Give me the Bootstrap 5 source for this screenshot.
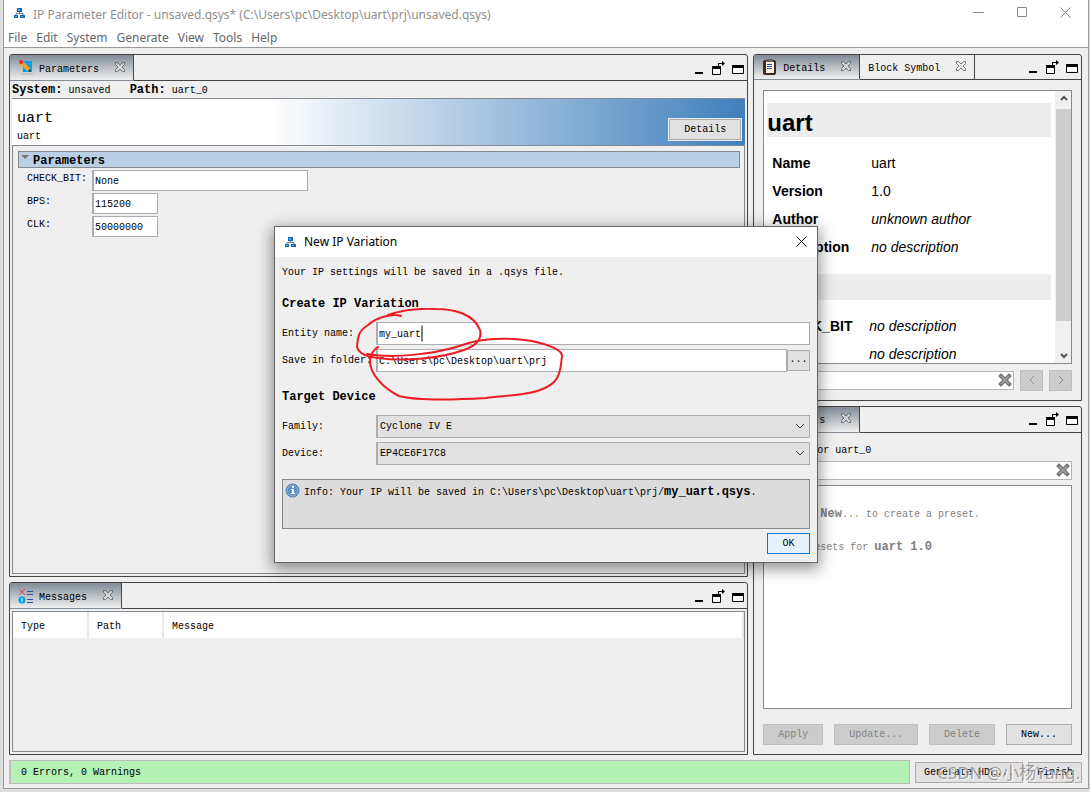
<!DOCTYPE html>
<html lang="en">
<head>
<meta charset="utf-8">
<meta name="viewport" content="width=device-width, initial-scale=1">
<title>IP Parameter Editor</title>
<link href="https://cdn.jsdelivr.net/npm/bootstrap@5.3.0/dist/css/bootstrap.min.css" rel="stylesheet">
<style>
:root{--face:#efefef;--edge:#444;--rim:#858990;--soft:#acacb2}
body{height:100vh;overflow:hidden;background:#dfdfdf;color:#000;font:10px/16px "Liberation Mono",monospace;padding:0 1px 3px 3px}
b,.strong{font-size:12px;font-weight:700}
input,select,button{font:inherit;color:inherit;border-radius:0}
svg{display:block;flex:none}
.ui-font{font-family:"Noto Sans","Noto Sans CJK SC",sans-serif;font-size:12px}
.frame{background:var(--face);border:1px solid #999;border-top:0}
.titlebar{height:25px;padding:0 17px 0 10px;color:#8f8f8f;background:#fff}
.titlebar svg{color:#888}
.ghost{background:none;border:0;padding:0}
.menus{height:23px;border-bottom:1px solid #999;gap:9px;padding:0 4px;background:#fff}
.menus a{color:#666;text-decoration:none;line-height:26px}
.work{padding:6px 6px 0 5px;gap:5px;min-height:0}
.col-main{flex:740 1 0;gap:5px;min-width:0}
.col-side{flex:329 1 0;gap:5px;min-width:0}
.pane{border:1px solid var(--edge);border-radius:3px 3px 0 0;min-height:0}
.grow-a{flex:525 1 0}.grow-b{flex:172 1 0}.grow-c{flex:347 1 0}.grow-d{flex:350 1 0}
.tabs{height:26px}
.tab-item{border-right:1px solid var(--edge);border-bottom:1px solid var(--edge);padding:0 6px 0 8px;gap:5px}
.tab-item span{line-height:20px;padding-top:4px}
.tab-item.on{background:linear-gradient(#808b97,#c4c8cc 60%,var(--face));border-bottom-color:transparent}
.tab-item .ghost{margin:0 1px 2px 10px}
.tab-fill{border-bottom:1px solid var(--edge);padding:2px 2px 0 0}
.crumbs{height:17px;padding:0 2px;line-height:19px;white-space:pre}
.banner{margin:0 2px;height:48px;border:solid var(--rim);border-width:1px 0;background:linear-gradient(90deg,#fff 35%,#3f7fbd 100%);padding:0 4px 0 5px}
.banner h1{font-size:15px;line-height:20px;margin:10px 0 0;font-weight:400}
.wbtn{background:#e1e1e1;border:1px solid #adadad;height:21px;padding:1px 14px 0;line-height:18px;white-space:nowrap}
.wbtn:disabled{background:#ccc;border-color:#bfbfbf;color:#838383}
.banner .wbtn{box-shadow:0 0 0 1px #e8eef5;margin-bottom:5px;width:72px}
.sheet{margin:0 2px 2px;border:1px solid var(--rim);border-top:0;padding:5px 4px 0 5px}
.fold{height:17px;border:1px solid var(--rim);background:#b8cfe5;padding:0 2px;gap:4px}
.fold span{line-height:19px}
.prm{display:grid;grid-template-columns:65px 216px;row-gap:2px;padding:2px 0 0 9px}
.prm label{line-height:17px}
.field{background:#fff;border:1px solid var(--soft);border-left-width:2px;height:21px;padding:2px 0 0 1px;width:100%;min-width:0}
.prm .short{width:66px}
.msgs{margin:2px;border:1px solid var(--rim)}
.msgs table{width:100%;table-layout:fixed}
.msgs th{height:26px;background:#fff;font-weight:400;border-right:2px solid #e8e8e8;padding:4px 0 0 8px}
.side{padding:10px 9px 9px}
.doc-box{border:1px solid var(--rim);background:#fff;min-height:0}
.doc{font:14px/28px "Liberation Sans",Arial,sans-serif;padding:12px 4px 0 3px;overflow:hidden}
.doc h2{font-size:24px;line-height:40px;height:34px;margin:0 0 12px;background:#ededed;font-weight:700}
.doc h3{font-size:18px;line-height:26px;height:26px;margin:13px 0 12px;background:#ededed;font-weight:700}
.doc th{padding:0 0 0 5px;width:104px;font-weight:700}
.doc td{padding:0}
.doc td,.doc th{line-height:28px}
.second th{width:102px}
.vbar{width:16px;background:#f0f0f0;border-left:1px solid #f0f0f0;padding:4px 0}
.thumb{background:#cdcdcd;height:212px}
.find{border:1px solid #b5b5b5;background:#fff;height:19px;padding-right:1px}
.find input{border:0;background:none;min-width:0}
.trim{gap:6px}
.nav-sq{width:23px;height:21px;padding:0}
.preset-row{margin:2px 0 5px}
.actions{margin-top:15px}
.ready{border:1px solid #bdbdbd;border-left-width:2px;background:#b4f1b4;height:24px;padding:0 10px;line-height:24px}
.foot{padding:5px 6px 4px 5px;gap:5px}
.foot .wbtn{padding:1px 8px 0}
.layer{pointer-events:none}
.dlg{pointer-events:auto;width:544px;border:1px solid #666;background:var(--face);box-shadow:0 4px 14px 2px rgba(0,0,0,.42)}
.dlg-top{height:30px;background:#fff;padding:0 10px}
.dlg-body{padding:8px 7px}
.dlg h2{font-size:12px;line-height:16px;font-weight:700;margin:15px 0 10px}
.pairs{display:grid;grid-template-columns:94px 1fr;row-gap:4px;padding-bottom:2px}
.pairs label{line-height:23px}
.pairs .field,.pairs .pick{height:23px}
.pick{appearance:none;width:100%;border:1px solid var(--soft);border-left-width:2px;padding:1px 2px 0;background:#e1e1e1 url("data:image/svg+xml,%3Csvg xmlns='http://www.w3.org/2000/svg' width='10' height='6'%3E%3Cpath d='M1 1l4 4 4-4' fill='none' stroke='%23444'/%3E%3C/svg%3E") no-repeat right 4px center}
.note{margin-top:12px;height:50px;border:1px solid var(--rim);background:#dcdcdc;padding:3px 2px;gap:4px;line-height:19px}
.ok{background:#e5f1fb;border-color:#0078d7;width:43px;padding:1px 0 0}
.ink{left:81px;top:81px}
.hint{color:#808080;padding:20px}
.mark-text{right:8px;bottom:2px;font:17px/26px "Noto Sans","Noto Sans CJK SC",sans-serif;color:rgba(130,130,130,.75);text-shadow:1px 1px 0 rgba(255,255,255,.8);pointer-events:none}
</style>
</head>
<body class="d-flex flex-column">
<svg width="0" height="0" class="position-absolute" aria-hidden="true">
  <symbol id="i-app" viewBox="0 0 11 12"><path d="M5.500 4v3M2 9V6.500h7V9" fill="none" stroke="#5f7f99"/><path d="M3 1h5v4H3zM0 8h4v3H0zM6 8h5v3H6z" fill="#1467b4"/><path d="M4 2h2v2H4zM1 9h2v1H1zM7 9h2v1H7z" fill="#3fb0f0"/></symbol>
  <symbol id="i-x" viewBox="0 0 12 12"><path d="M1.500 1.500h2L6 4l2.500-2.500h2v2L8 6l2.500 2.500v2h-2L6 8l-2.500 2.500h-2v-2L4 6 1.500 3.500z" fill="#f4f4f4" fill-opacity=".4" stroke="#666" stroke-width=".9"/></symbol>
  <symbol id="i-win" viewBox="0 0 50 16"><path d="M0 11h8v2H0z"/><path d="M17.500 5.500h8v8h-8z" fill="#fff" stroke="#000"/><path d="M17 5h9v3h-9zM23 5V2h4V0l3 2.500L27 5V3h-3v2z"/><path d="M37.500 5.500h11v7h-11z" fill="#fff" stroke="#000"/><path d="M37 4h12v3H37z"/></symbol>
  <symbol id="i-clear" viewBox="0 0 14 14"><path d="M3 3l8 8m0-8l-8 8" stroke="#6f6f6f" stroke-width="4" stroke-linecap="square"/><path d="M3 3l8 8m0-8l-8 8" stroke="#9b9b9b" stroke-width="2"/></symbol>
</svg>

<div class="frame flex-fill d-flex flex-column position-relative">
  <header class="titlebar ui-font d-flex align-items-center">
    <svg width="11" height="12"><use href="#i-app"/></svg>
    <span class="ms-2 pt-1 me-auto">IP Parameter Editor - unsaved.qsys* (C:\Users\pc\Desktop\uart\prj\unsaved.qsys)</span>
    <button class="ghost" aria-label="Minimize"><svg width="11" height="11"><path d="M0 5.500h11" stroke="currentColor"/></svg></button>
    <button class="ghost ms-4 px-2" aria-label="Maximize"><svg width="12" height="11"><path d="M1.500.5h9v9h-9z" fill="none" stroke="currentColor"/></svg></button>
    <button class="ghost ms-4" aria-label="Close"><svg width="11" height="11"><path d="M.5.5l10 10m0-10l-10 10" stroke="currentColor"/></svg></button>
  </header>
  <nav class="menus ui-font d-flex">
    <a href="#">File</a><a href="#">Edit</a><a href="#">System</a><a href="#">Generate</a><a href="#">View</a><a href="#">Tools</a><a href="#">Help</a>
  </nav>

  <main class="work flex-fill d-flex">
    <div class="col-main d-flex flex-column">
      <section class="pane grow-a d-flex flex-column">
        <div class="tabs d-flex">
          <div class="tab-item on d-flex align-items-center">
            <svg width="16" height="16"><path d="M3 13h12v2H3z" fill="#c4c4c4"/><path d="M5 1h9v11H5z" fill="#00a2f2"/><path d="M3 2l8 8" stroke="#f1a520" stroke-width="4"/><path d="M10 11l3 1-1-3z" fill="#333"/><circle cx="3" cy="2" r="2" fill="#e8252e"/></svg>
            <span>Parameters</span><button class="ghost" aria-label="Close Parameters"><svg width="12" height="12"><use href="#i-x"/></svg></button>
          </div>
          <div class="tab-fill flex-fill d-flex justify-content-end align-items-center"><svg width="50" height="16"><use href="#i-win"/></svg></div>
        </div>
        <div class="crumbs"><b>System:</b> unsaved  <b> Path:</b> uart_0</div>
        <div class="banner d-flex justify-content-between align-items-end">
          <div class="align-self-start"><h1>uart</h1><div>uart</div></div>
          <button class="wbtn">Details</button>
        </div>
        <div class="sheet flex-fill">
          <button class="fold w-100 d-flex align-items-start"><svg width="8" height="8"><path d="M0 3h8L4 7z" fill="#777"/></svg><span class="strong">Parameters</span></button>
          <form class="prm">
            <label for="cb">CHECK_BIT:</label><input id="cb" class="field" value="None">
            <label for="bps">BPS:</label><input id="bps" class="field short" value="115200">
            <label for="clk">CLK:</label><input id="clk" class="field short" value="50000000">
          </form>
        </div>
      </section>

      <section class="pane grow-b d-flex flex-column">
        <div class="tabs d-flex">
          <div class="tab-item on d-flex align-items-center">
            <svg width="16" height="16"><path d="M1 1l6 6m0-6L1 7" stroke="#e8483f"/><circle cx="4" cy="12" r="3.500" fill="#00a2f2"/><path d="M4 10v4" stroke="#fff"/><path d="M9 3.500h6M9 6.500h6M9 11.500h6M9 14.500h6" stroke="#2450a8"/></svg>
            <span>Messages</span><button class="ghost" aria-label="Close Messages"><svg width="12" height="12"><use href="#i-x"/></svg></button>
          </div>
          <div class="tab-fill flex-fill d-flex justify-content-end align-items-center"><svg width="50" height="16"><use href="#i-win"/></svg></div>
        </div>
        <div class="msgs flex-fill">
          <table><colgroup><col style="width:75px"><col style="width:75px"><col></colgroup>
            <thead><tr><th>Type</th><th>Path</th><th>Message</th></tr></thead></table>
        </div>
      </section>
    </div>

    <div class="col-side d-flex flex-column">
      <section class="pane grow-c d-flex flex-column">
        <div class="tabs d-flex">
          <div class="tab-item on d-flex align-items-center">
            <svg width="16" height="16"><rect x="1" y="1" width="13" height="15" rx="2" fill="#402828"/><path d="M4 0h7v3H4z" fill="#666"/><path d="M4 3h8v11H4z" fill="#fff5dc"/><path d="M5 5.500h5M5 7.500h5M5 9.500h5" stroke="#2458a0"/></svg>
            <span>Details</span><button class="ghost" aria-label="Close Details"><svg width="12" height="12"><use href="#i-x"/></svg></button>
          </div>
          <div class="tab-item d-flex align-items-center"><span>Block Symbol</span><button class="ghost" aria-label="Close Block Symbol"><svg width="12" height="12"><use href="#i-x"/></svg></button></div>
          <div class="tab-fill flex-fill d-flex justify-content-end align-items-center"><svg width="50" height="16"><use href="#i-win"/></svg></div>
        </div>
        <div class="side trim flex-fill d-flex flex-column overflow-hidden">
          <div class="doc-box flex-fill d-flex">
            <div class="doc flex-fill">
              <h2>uart</h2>
              <table><tr><th>Name</th><td>uart</td></tr><tr><th>Version</th><td>1.0</td></tr><tr><th>Author</th><td><i>unknown author</i></td></tr><tr><th>Description</th><td><i>no description</i></td></tr></table>
              <h3>&nbsp;</h3>
              <table class="second"><tr><th>CHECK_BIT</th><td><i>no description</i></td></tr><tr><th>BPS</th><td><i>no description</i></td></tr></table>
            </div>
            <div class="vbar d-flex flex-column align-items-center">
              <svg width="8" height="6"><path d="M1 5l3-3 3 3" fill="none" stroke="#555" stroke-width="2"/></svg>
              <div class="thumb w-100 mt-2"></div>
              <svg class="mt-auto" width="8" height="6"><path d="M1 1l3 3 3-3" fill="none" stroke="#555" stroke-width="2"/></svg>
            </div>
          </div>
          <div class="trim d-flex align-items-center">
            <div class="find flex-fill d-flex align-items-center"><input class="flex-fill" aria-label="Find in details"><svg width="14" height="14"><use href="#i-clear"/></svg></div>
            <button class="wbtn nav-sq" disabled aria-label="Previous"><svg class="m-auto" width="6" height="8"><path d="M5 0L1 4l4 4" fill="none" stroke="#888"/></svg></button>
            <button class="wbtn nav-sq" disabled aria-label="Next"><svg class="m-auto" width="6" height="8"><path d="M1 0l4 4-4 4" fill="none" stroke="#888"/></svg></button>
          </div>
        </div>
      </section>

      <section class="pane grow-d d-flex flex-column">
        <div class="tabs d-flex">
          <div class="tab-item on d-flex align-items-center">
            <svg width="16" height="16"><path d="M2 2h12v12H2z" fill="#d5dbe2" stroke="#567"/></svg>
            <span>Presets</span><button class="ghost" aria-label="Close Presets"><svg width="12" height="12"><use href="#i-x"/></svg></button>
          </div>
          <div class="tab-fill flex-fill d-flex justify-content-end align-items-center"><svg width="50" height="16"><use href="#i-win"/></svg></div>
        </div>
        <div class="side flex-fill d-flex flex-column">
          <label for="pf">Presets for uart_0</label>
          <div class="find preset-row d-flex align-items-center"><input id="pf" class="flex-fill"><svg width="14" height="14"><use href="#i-clear"/></svg></div>
          <div class="doc-box flex-fill hint"><p>Click <b>New</b>... to create a preset.</p><p>No presets for <b>uart 1.0</b></p></div>
          <div class="actions d-flex justify-content-between">
            <button class="wbtn" disabled>Apply</button><button class="wbtn" disabled>Update...</button><button class="wbtn" disabled>Delete</button><button class="wbtn">New...</button>
          </div>
        </div>
      </section>
    </div>
  </main>

  <footer class="foot d-flex align-items-center">
    <div class="ready flex-fill">0 Errors, 0 Warnings</div>
    <button class="wbtn">Generate HDL...</button><button class="wbtn">Finish</button>
  </footer>

  <div class="layer position-absolute top-0 start-0 w-100 h-100 d-flex align-items-center justify-content-center">
    <div class="dlg position-relative" role="dialog" aria-labelledby="dt">
      <div class="dlg-top d-flex align-items-center">
        <svg width="11" height="12"><use href="#i-app"/></svg><span id="dt" class="ui-font ms-2 me-auto">New IP Variation</span>
        <button class="ghost" aria-label="Close dialog"><svg width="11" height="11"><path d="M.5.5l10 10m0-10l-10 10" stroke="#000"/></svg></button>
      </div>
      <div class="dlg-body">
        <div>Your IP settings will be saved in a .qsys file.</div>
        <h2>Create IP Variation</h2>
        <div class="pairs">
          <label for="en">Entity name:</label><input id="en" class="field" value="my_uart">
          <label for="sf">Save in folder:</label>
          <div class="d-flex align-items-center"><input id="sf" class="field" value="C:\Users\pc\Desktop\uart\prj"><button class="wbtn nav-sq flex-shrink-0" aria-label="Browse">...</button></div>
        </div>
        <h2>Target Device</h2>
        <div class="pairs">
          <label for="fa">Family:</label><select id="fa" class="pick"><option>Cyclone IV E</option></select>
          <label for="de">Device:</label><select id="de" class="pick"><option>EP4CE6F17C8</option></select>
        </div>
        <div class="note d-flex align-items-start">
          <svg width="15" height="15"><circle cx="7.500" cy="7.500" r="6.500" fill="#5d8fc9" stroke="#4a76ad"/><circle cx="7.500" cy="7.500" r="5.500" fill="none" stroke="#a9c6e6" stroke-width=".7"/><path d="M7 3h2v2H7zM6 6h3v4h1v1H6v-1h1V7H6z" fill="#fff"/></svg>
          <span>Info: Your IP will be saved in C:\Users\pc\Desktop\uart\prj/<b>my_uart.qsys</b>.</span>
        </div>
        <div class="d-flex justify-content-end mt-1"><button class="wbtn ok">OK</button></div>
      </div>
      <svg class="ink position-absolute" width="210" height="94" fill="none" stroke="#ed1c24" stroke-width="2" stroke-linecap="round" aria-hidden="true">
        <path d="M45 8C35 5 20 10 12 17C0 24 2 34 1 39C3 46 12 49 22 50C50 54 85 50 108 42C122 37 126 30 124 22C118 6 98 1 80 1C56 0 43 3 32 7"/>
        <path d="M11 46C40 51 80 45 100 39C125 29 150 29 176 33C194 37 206 42 206 48C205 58 204 68 198 74C184 88 150 87 130 90C95 92 62 93 43 88C27 80 14 66 14 53C14 47 18 41 22 39"/>
        <path d="M66 18v15" stroke="#000" stroke-width="1"/>
      </svg>
    </div>
  </div>
  <div class="mark-text position-absolute">CSDN @小杨Yang.</div>
</div>
<script src="https://cdn.jsdelivr.net/npm/bootstrap@5.3.0/dist/js/bootstrap.bundle.min.js"></script>
</body>
</html>
